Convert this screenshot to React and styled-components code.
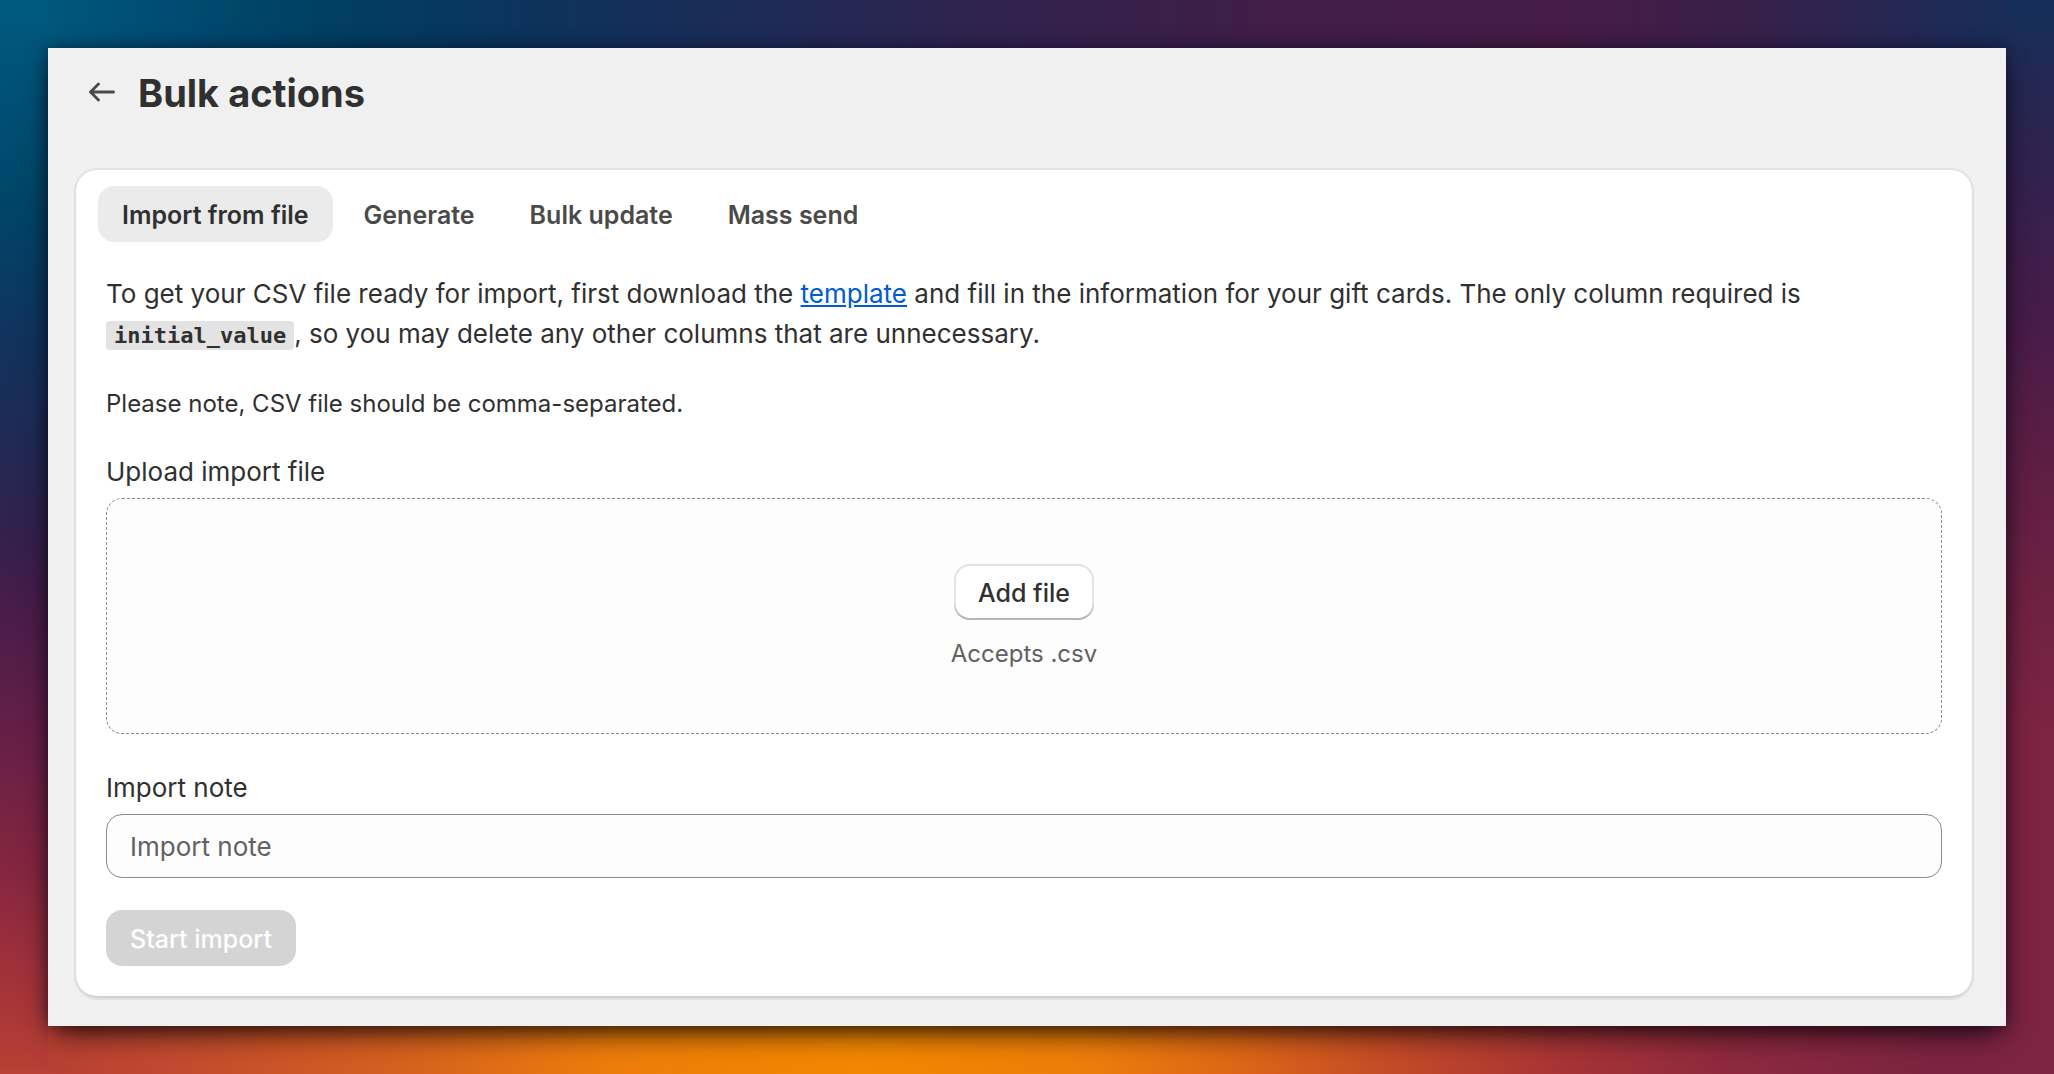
import React, { useState } from 'react';
import styled, { createGlobalStyle } from 'styled-components';

const GlobalStyle = createGlobalStyle`
    *, *:before, *:after{
        box-sizing: border-box;
    }
    body{
        margin: 0;
        background: #4a1a46;
        color: #303030;
        font-family: Inter, "Liberation Sans", sans-serif;
        font-size: 26px;
        line-height: 40px;
    }
    button, input{
        font-family: inherit;
    }
`;
// one gradient band per side of the page
const Backdrop = styled.div`
    min-height: 100vh;
    padding: 48px;
    display: flex;
    background:
        linear-gradient(180deg, #005a80 0, #00557a 48px, #004468 20%, #12325c 32%, #1e2b56 40%, #34204c 50%, #4a1c4a 57%, #6a2046 70%, #84263f 81%, #a2323a 91%, #b84034 100%) left / 48px 100% no-repeat,
        linear-gradient(180deg, #14305a 0%, #2c2450 12%, #461c4a 29%, #5c1e44 42%, #702242 57%, #7c2442 68%, #7c2442 100%) right / 48px 100% no-repeat,
        linear-gradient(90deg, #005a80 0, #00577c 48px, #004a70 9%, #003f62 16%, #0c345c 25%, #1c2c58 36%, #30234e 48%, #401e48 62%, #461c46 76%, #38204a 85%, #1e2a56 95%, #14305a 100%) top / 100% 48px no-repeat,
        linear-gradient(90deg, #b84034 0, #b84034 48px, #c24a30 8%, #d8621e 20%, #ee7e0a 30%, #f48800 42%, #ee7e0a 53%, #dc6418 61%, #c44a28 68%, #a83436 76%, #8e2a3e 84%, #7c2442 94%, #7c2442 100%) bottom / 100% 48px no-repeat;
`;
const Page = styled.main`
    flex: 1;
    min-width: 0;
    padding: 0 32px 28px 26px;
    background: #f0f0f0;
    box-shadow: 0 14px 28px -8px rgba(0, 0, 0, 0.75), 0 0 16px rgba(10, 0, 30, 0.5);
`;
const PageHeader = styled.header`
    display: flex;
    align-items: center;
    gap: 16px;
    height: 90px;
    margin-bottom: 30px;
`;
const BackButton = styled.button`
    display: flex;
    align-items: center;
    justify-content: center;
    width: 48px;
    height: 48px;
    padding: 0;
    border: 0;
    background: none;
    cursor: pointer;
`;
const Title = styled.h1`
    margin: 0;
    font-size: 38px;
    line-height: 48px;
    font-weight: 700;
`;
const Card = styled.section`
    padding: 18px 32px 32px;
    border-radius: 24px;
    background: #fff;
    box-shadow:
        inset 0 2px 0 #e3e3e3,
        inset 2px 0 0 #dedede,
        inset -2px 0 0 #dedede,
        inset 0 -2px 0 #d0d0d0,
        0 2px 0 #e0e0e0;
`;
const TabList = styled.div`
    display: flex;
    gap: 7px;
    margin: 0 -8px 32px;
`;
const Tab = styled.button`
    height: 56px;
    padding: 2px 24px 0;
    border: 0;
    border-radius: 16px;
    background: ${props=>props.$active ? '#ebebeb' : 'transparent'};
    color: ${props=>props.$active ? '#303030' : '#4a4a4a'};
    font-size: 25px;
    line-height: 32px;
    font-weight: 600;
    cursor: pointer;
`;
const Text = styled.p`
    margin: 0 0 30px;
`;
const Note = styled.p`
    margin: 0 0 28px;
    font-size: 24px;
`;
const TemplateLink = styled.a`
    color: #005bd3;
    text-decoration: underline;
`;
const Code = styled.code`
    padding: 2px 8px;
    border-radius: 4px;
    background: #e3e3e3;
    font-family: "DejaVu Sans Mono", "Liberation Mono", monospace;
    font-size: 22px;
    line-height: 24px;
    font-weight: 700;
`;
const Label = styled.label`
    display: block;
    margin-bottom: 6px;
`;
const DropZone = styled.div`
    display: flex;
    flex-direction: column;
    align-items: center;
    gap: 18px;
    padding: 65px 0 63px;
    margin-bottom: 34px;
    border: 1px dashed #8a8a8a;
    border-radius: 16px;
    background: #fdfdfd;
`;
const Hint = styled.span`
    color: #616161;
    font-size: 24px;
    line-height: 32px;
`;
const Button = styled.button`
    height: 56px;
    padding: 2px 24px 0;
    border: 0;
    border-radius: 16px;
    background: #fff;
    box-shadow:
        inset 0 -2px 0 #b5b5b5,
        inset 0 0 0 2px #e3e3e3;
    color: #303030;
    font-size: 25px;
    line-height: 32px;
    font-weight: 500;
    cursor: pointer;
    &:disabled{
        background: #d4d4d4;
        box-shadow: none;
        color: #fff;
        cursor: default;
    }
`;
const TextInput = styled.input`
    display: block;
    width: 100%;
    height: 64px;
    margin-bottom: 32px;
    padding: 0 23px;
    border: 1px solid #8a8a8a;
    border-radius: 16px;
    background: #fdfdfd;
    color: #303030;
    font-size: 26px;
    &::placeholder{
        color: #616161;
        opacity: 1;
    }
`;

const ArrowLeft = () =>(
    <svg width="40" height="40" viewBox="0 0 40 40" fill="none" aria-hidden="true">
        <path
            d="M35.5 19H12.5M20.5 11L12.5 19L20.5 27"
            stroke="#4a4a4a"
            strokeWidth="2.9"
            strokeLinecap="round"
            strokeLinejoin="round"
        />
    </svg>
);

const tabs = ['Import from file', 'Generate', 'Bulk update', 'Mass send'];

const App = () =>{
    const [active, setActive] = useState(tabs[0]);
    const [note, setNote] = useState('');

    return (
        <Backdrop>
            <GlobalStyle/>
            <Page>
                <PageHeader>
                    <BackButton type="button" aria-label="Back">
                        <ArrowLeft/>
                    </BackButton>
                    <Title>Bulk actions</Title>
                </PageHeader>
                <Card>
                    <TabList role="tablist">
                        {
                            tabs.map(tab =>(
                                <Tab
                                    key={tab}
                                    type="button"
                                    role="tab"
                                    aria-selected={tab === active}
                                    $active={tab === active}
                                    onClick={()=>setActive(tab)}
                                >
                                    {tab}
                                </Tab>
                            ))
                        }
                    </TabList>
                    <Text>
                        To get your CSV file ready for import, first download the <TemplateLink href="#template">template</TemplateLink> and
                        fill in the information for your gift cards. The only column required is <Code>initial_value</Code>, so
                        you may delete any other columns that are unnecessary.
                    </Text>
                    <Note>Please note, CSV file should be comma-separated.</Note>
                    <Label htmlFor="add-file">Upload import file</Label>
                    <DropZone>
                        <Button type="button" id="add-file">Add file</Button>
                        <Hint>Accepts .csv</Hint>
                    </DropZone>
                    <Label htmlFor="import-note">Import note</Label>
                    <TextInput
                        type="text"
                        id="import-note"
                        placeholder="Import note"
                        value={note}
                        onChange={e=>setNote(e.target.value)}
                    />
                    <Button type="button" disabled>Start import</Button>
                </Card>
            </Page>
        </Backdrop>
    )
};

export default App;
